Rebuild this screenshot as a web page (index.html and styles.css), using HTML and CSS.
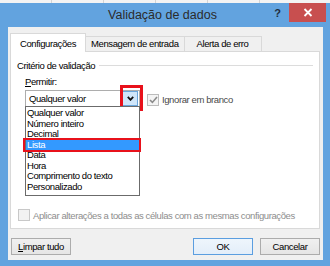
FILE: index.html
```html
<!DOCTYPE html>
<html lang="pt">
<head>
    <meta charset="UTF-8">
    <title>Validação de dados</title>
    <link rel="stylesheet" href="styles.css">
</head>
<body>
    <div class="sheet-strip">
        <span></span><span></span><span></span><span></span><span></span>
    </div>

    <div class="window">
        <div class="titlebar">
            <div class="title">Validação de dados</div>
            <div class="help">?</div>
            <div class="close">
                <svg width="10" height="9" viewBox="0 0 10 9">
                    <path d="M1.5 1 L8.5 8 M8.5 1 L1.5 8" stroke="#fff" stroke-width="1.8" fill="none"/>
                </svg>
            </div>
        </div>

        <div class="client">
            <div class="tabs">
                <div class="tab active">Configurações</div>
                <div class="tab tab-msg">Mensagem de entrada</div>
                <div class="tab tab-alert">Alerta de erro</div>
            </div>

            <div class="panel">
                <div class="group-title">
                    <span>Critério de validação</span>
                    <div class="group-line"></div>
                </div>

                <div class="field-label"><u>P</u>ermitir:</div>

                <div class="combo-row">
                    <div class="combo">
                        <div class="combo-value">Qualquer valor</div>
                        <div class="combo-btn">
                            <svg width="7" height="5" viewBox="0 0 7 5">
                                <path d="M0.8 0.8 L3.5 3.8 L6.2 0.8" stroke="#111" stroke-width="1.8" fill="none"/>
                            </svg>
                        </div>
                        <div class="mark mark-btn"></div>

                        <ul class="dropdown">
                            <li>Qualquer valor</li>
                            <li>Número inteiro</li>
                            <li>Decimal</li>
                            <li class="selected">Lista<div class="mark mark-item"></div></li>
                            <li>Data</li>
                            <li>Hora</li>
                            <li>Comprimento do texto</li>
                            <li>Personalizado</li>
                        </ul>
                    </div>

                    <label class="check">
                        <span class="box">
                            <svg width="9" height="8" viewBox="0 0 9 8">
                                <path d="M1 4 L3.4 6.4 L8 1" stroke="#8a8a8a" stroke-width="1.6" fill="none"/>
                            </svg>
                        </span>
                        <span class="check-text">Ignorar em branco</span>
                    </label>
                </div>

                <label class="check apply">
                    <span class="box"></span>
                    <span class="check-text disabled">Aplicar alterações a todas as células com as mesmas configurações</span>
                </label>
            </div>

            <div class="footer">
                <button class="btn"><u>L</u>impar tudo</button>
                <div class="footer-right">
                    <button class="btn default">OK</button>
                    <button class="btn">Cancelar</button>
                </div>
            </div>
        </div>
    </div>
</body>
</html>
```

FILE: styles.css
```css
* {
    box-sizing: border-box;
}

body {
    margin: 0;
    width: 330px;
    height: 266px;
    overflow: hidden;
    background: #62a3df;
    font-family: "Liberation Sans", Arial, sans-serif;
    font-size: 9.5px;
    letter-spacing: -0.4px;
    color: #000;
}

.sheet-strip {
    height: 3px;
    background: #f3f3f3;
    display: flex;
}

.sheet-strip span {
    width: 52px;
    border-right: 1px solid #d4d4d4;
}

.window {
    background: #62a3df;
    height: 263px;
    display: flex;
    flex-direction: column;
}

/* title bar */
.titlebar {
    height: 24px;
    display: flex;
    align-items: flex-start;
}

.title {
    flex: 1;
    padding-left: 58px;
    text-align: center;
    font-size: 12.5px;
    letter-spacing: 0;
    line-height: 24px;
    color: #2b2b2b;
}

.help {
    width: 14px;
    margin: 4px 8px 0 0;
    text-align: right;
    font-weight: bold;
    font-size: 11px;
    letter-spacing: 0;
    color: #1f2d3d;
}

.close {
    width: 37px;
    height: 19px;
    margin-right: 4px;
    background: #c84f4f;
    display: flex;
    align-items: center;
    justify-content: center;
}

/* client area */
.client {
    margin: 0 7px 6px 8px;
    flex: 1;
    background: #f0f0f0;
    padding: 6px 3px 0 2px;
    display: flex;
    flex-direction: column;
}

.tabs {
    display: flex;
    align-items: flex-end;
    height: 18px;
    position: relative;
    z-index: 1;
}

.tab {
    height: 15px;
    padding: 0 9px;
    border: 1px solid #d9d9d9;
    border-bottom: none;
    background: #f0f0f0;
    line-height: 14px;
    margin-left: -1px;
}

.tab-msg {
    padding: 0 5px;
}

.tab-alert {
    padding: 0 12px;
}

.tab:first-child {
    margin-left: 0;
}

.tab.active {
    height: 19px;
    margin-bottom: -1px;
    background: #fff;
    line-height: 19px;
    padding: 0 9px;
}

.panel {
    height: 178px;
    border: 1px solid #d9d9d9;
    background: #fff;
    padding: 7px 6px 0 6px;
    display: flex;
    flex-direction: column;
    position: relative;
}

.group-title {
    display: flex;
    align-items: center;
    height: 12px;
}

.group-title span {
    padding-right: 4px;
}

.group-line {
    flex: 1;
    height: 1px;
    background: #dcdcdc;
}

.field-label {
    margin: 5px 0 0 8px;
    height: 12px;
    line-height: 12px;
}

.combo-row {
    display: flex;
    align-items: center;
    margin: 2px 0 0 8px;
}

.combo {
    width: 115px;
    height: 17px;
    border: 1px solid #adadad;
    background: #fff;
    display: flex;
    align-items: center;
    position: relative;
}

.combo-value {
    flex: 1;
    padding-left: 3px;
}

.combo-btn {
    width: 16px;
    height: 15px;
    margin-right: 1px;
    background: #cfe6fa;
    border: 1px solid #69a6dc;
    display: flex;
    align-items: center;
    justify-content: center;
}

.mark {
    position: absolute;
    border: 3px solid #e8111b;
}

.mark-btn {
    right: -4px;
    top: -6px;
    width: 23px;
    height: 26px;
}

.dropdown {
    position: absolute;
    left: -1px;
    top: 15px;
    width: 115px;
    height: 90px;
    margin: 0;
    padding: 1px 0 2px 0;
    list-style: none;
    border: 1px solid #6b6b6b;
    background: #fff;
    z-index: 2;
}

.dropdown li {
    height: 10.5px;
    line-height: 10.5px;
    padding-left: 1px;
    position: relative;
}

.dropdown li.selected {
    background: #3399ff;
    color: #fff;
}

.mark-item {
    border-width: 2px;
    left: -3px;
    right: -2px;
    top: -2px;
    bottom: -2px;
}

.check {
    display: flex;
    align-items: center;
}

.check .box {
    width: 12px;
    height: 12px;
    border: 1px solid #bcbcbc;
    background: #f4f4f4;
    display: flex;
    align-items: center;
    justify-content: center;
    margin-right: 3px;
}

.combo-row .check {
    margin-left: 7px;
    margin-top: 2px;
    color: #4a4a4a;
}

.apply {
    margin: auto 0 7px 1px;
}

.apply .box {
    border-color: #c8c8c8;
    background: #f2f2f2;
}

.check-text.disabled {
    color: #8d8d8d;
}

/* buttons */
.footer {
    display: flex;
    justify-content: space-between;
    margin-top: 9px;
    padding-left: 1px;
}

.footer-right {
    display: flex;
    gap: 7px;
}

.btn {
    width: 60px;
    height: 17px;
    padding: 0;
    font-family: inherit;
    font-size: 9.5px;
    letter-spacing: -0.4px;
    color: #000;
    border: 1px solid #acacac;
    background: linear-gradient(#f0f0f0, #e5e5e5);
}

.btn.default {
    border-color: #5b9ee0;
    background: linear-gradient(#eef5fc, #e3eef9);
}
```
